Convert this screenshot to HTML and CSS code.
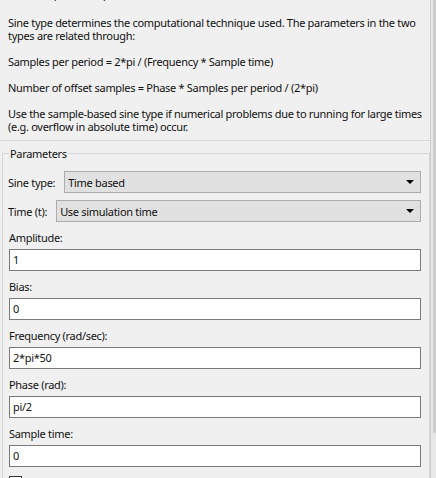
FILE: index.html
```html
<!DOCTYPE html>
<html>
<head>
<meta charset="utf-8">
<link rel="stylesheet" href="styles.css">
</head>
<body>
<div class="window">
  <div class="main">
    <div class="desc">
      <p class="cut">O(t) = Amp*Sin(Freq*t+Phase) + Bias</p>
      <p>Sine type determines the computational technique used. The parameters in the two<br>types are related through:</p>
      <p>Samples per period = 2*pi / (Frequency * Sample time)</p>
      <p>Number of offset samples = Phase * Samples per period / (2*pi)</p>
      <p>Use the sample-based sine type if numerical problems due to running for large times<br>(e.g. overflow in absolute time) occur.</p>
    </div>
    <fieldset class="group">
      <legend class="legend">Parameters</legend>
      <div class="row">
        <span class="row-label">Sine type:</span>
        <div class="select"><span>Time based</span><span class="arrow"></span></div>
      </div>
      <div class="row row-second">
        <span class="row-label">Time (t):</span>
        <div class="select"><span>Use simulation time</span><span class="arrow"></span></div>
      </div>
      <div class="field field-first">
        <div class="field-label">Amplitude:</div>
        <div class="input">1</div>
      </div>
      <div class="field">
        <div class="field-label">Bias:</div>
        <div class="input">0</div>
      </div>
      <div class="field">
        <div class="field-label">Frequency (rad/sec):</div>
        <div class="input">2*pi*50</div>
      </div>
      <div class="field">
        <div class="field-label">Phase (rad):</div>
        <div class="input">pi/2</div>
      </div>
      <div class="field">
        <div class="field-label">Sample time:</div>
        <div class="input">0</div>
      </div>
      <div class="check-row">
        <span class="checkbox"></span>
        <span class="check-label">Interpret vector parameters as 1-D</span>
      </div>
    </fieldset>
  </div>
  <div class="scrollbar"><div class="thumb"></div></div>
</div>
</body>
</html>
```
FILE: styles.css
```css
html, body {
  margin: 0;
  padding: 0;
  background: #f0f0f0;
  overflow: hidden;
}
body {
  font-family: "Noto Sans", "DejaVu Sans", sans-serif;
  font-size: 11px;
  letter-spacing: -0.3px;
  color: #111;
  width: 436px;
  height: 478px;
}
.window {
  display: flex;
  width: 436px;
  height: 478px;
  overflow: hidden;
}
.main {
  width: 430px;
  flex: none;
  display: flex;
  flex-direction: column;
}
.desc {
  height: 140px;
  border-bottom: 1px solid #d8d8d8;
  padding: 0 8px;
  overflow: hidden;
  flex: none;
}
.desc p {
  margin: 0 0 13px 0;
  line-height: 13px;
  white-space: nowrap;
}
.desc p.cut {
  margin-top: -13px;
  margin-bottom: 16px;
}
.group {
  margin: 5px 0 0 2px;
  padding: 0 8px 0 5px;
  border: 1px solid #d5d5d5;
  border-bottom: none;
  min-width: 0;
  flex: 1;
}
.legend {
  padding: 1px 1px 0 1px;
  margin-left: 1px;
  line-height: 14px;
}
.row {
  display: flex;
  align-items: center;
  height: 22px;
  margin-top: 10px;
}
.row-second {
  margin-top: 7px;
}
.row-label {
  flex: none;
  margin-right: 9px;
}
.select {
  flex: 1;
  height: 20px;
  border: 1px solid #acacac;
  background: #e1e1e1;
  display: flex;
  align-items: center;
  justify-content: space-between;
  padding: 0 6px 0 3px;
}
.arrow {
  width: 0;
  height: 0;
  border-left: 4px solid transparent;
  border-right: 4px solid transparent;
  border-top: 4px solid #000;
}
.field {
  margin-left: 1px;
}
.field-first {
  margin-top: 9px;
}
.field-label {
  height: 14px;
  line-height: 14px;
  margin-bottom: 4px;
}
.input {
  height: 20px;
  line-height: 20px;
  border: 1px solid #7a7a7a;
  background: #fff;
  padding-left: 3px;
  margin-bottom: 9px;
}
.check-row {
  display: flex;
  align-items: center;
  margin-left: 1px;
  margin-top: -1px;
}
.checkbox {
  width: 11px;
  height: 11px;
  border: 1px solid #333;
  background: #fff;
  margin-right: 4px;
}
.check-label {
  visibility: hidden;
}
.scrollbar {
  flex: none;
  width: 5px;
  border-left: 1px solid #cdcdcd;
  background: #e8e8e8;
}
.thumb {
  margin-left: 2px;
  width: 3px;
  height: 433px;
  background: #cdcdcd;
}
```
